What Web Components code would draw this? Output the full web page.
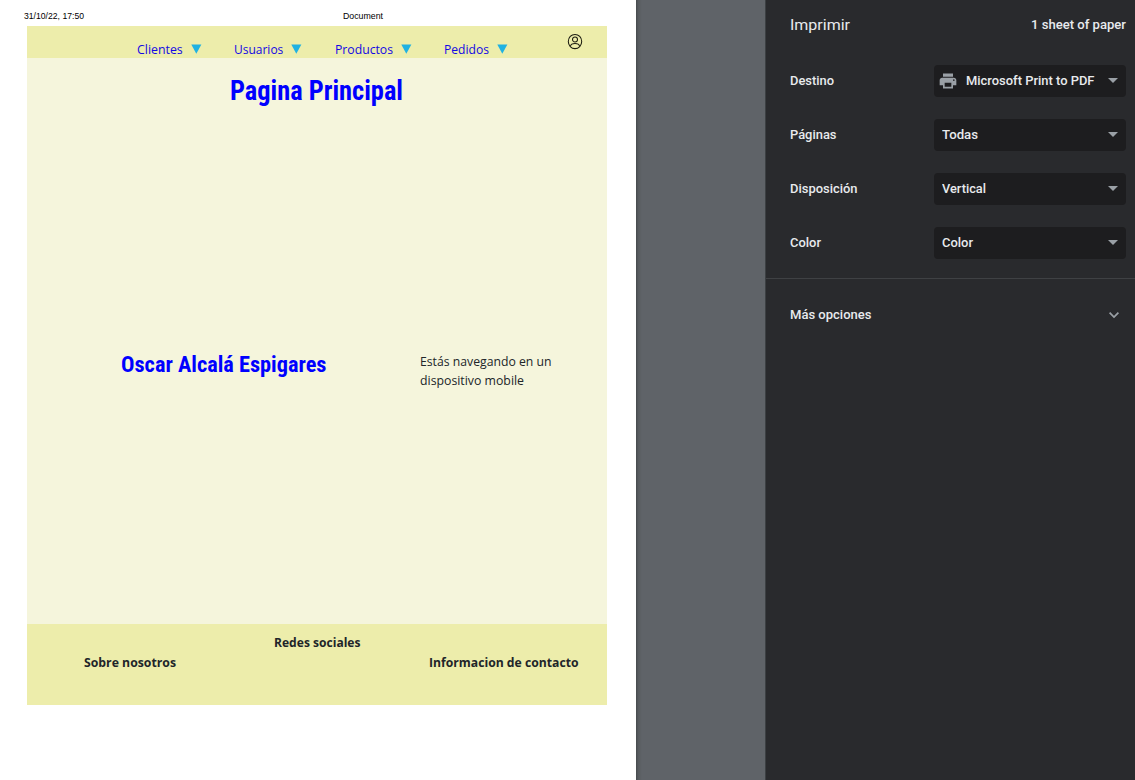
<!DOCTYPE html>
<html lang="es">
<head>
<meta charset="utf-8">
<title>Imprimir</title>
<style>
html,body{margin:0;height:100%;overflow:hidden;background:#fff}
</style>
</head>
<body>
<print-dialog></print-dialog>
<script>
function define(name, html, ready) {
  const t = document.createElement('template');
  t.innerHTML = html;
  customElements.define(name, class extends HTMLElement {
    connectedCallback() {
      if (this.shadowRoot) return;
      this.attachShadow({mode: 'open'}).append(t.content.cloneNode(true));
      if (ready) ready(this, this.shadowRoot);
    }
  });
}

/* One line of text condensed or widened to the width in its "w" attribute */
define('fit-text', `
<style>:host{display:block;flex:none;white-space:nowrap}
span{display:inline-block;transform-origin:0 50%;vertical-align:top}</style>
<span><slot></slot></span>`, (el, root) => {
  const s = root.querySelector('span'), w = +el.getAttribute('w');
  el.style.width = w + 'px';
  s.style.transform = 'scaleX(' + w / s.getBoundingClientRect().width + ')';
});

define('nav-item', `
<style>:host{display:flex;align-items:flex-start;gap:8px;color:#1208e4;font:13px/19px "Open Sans",sans-serif}
svg{margin-top:4px;flex:none;display:block}</style>
<slot></slot><svg width="11" height="10"><path d="M0.3 .6H10.4L5.3 9.8Z" fill="#20b2e2"/></svg>`);

define('user-icon', `
<style>:host{display:block}svg{display:block}</style>
<svg width="16" height="17" viewBox="0 0 16 17" fill="none" stroke="#1c1c10" stroke-width="1.05">
<ellipse cx="8" cy="8.5" rx="6.7" ry="7.1"/><circle cx="8" cy="6.4" r="2.5"/><path d="M3.4 13.4C4.2 9.6 11.8 9.6 12.6 13.4"/></svg>`);

define('site-header', `
<style>:host{display:flex;box-sizing:border-box;height:32px;padding:0 24px 0 110px;background:#ededab}
nav{display:flex;padding-top:14px}
nav-item+nav-item{margin-left:32.3px}
user-icon{margin:7px 0 0 auto}</style>
<nav><nav-item><fit-text w="45.7">Clientes</fit-text></nav-item><nav-item><fit-text w="49.3">Usuarios</fit-text></nav-item><nav-item><fit-text w="58">Productos</fit-text></nav-item><nav-item><fit-text w="45">Pedidos</fit-text></nav-item></nav>
<user-icon></user-icon>`);

define('site-main', `
<style>:host{display:block;height:566px;background:#f5f5dc;color:#212529;font:13px/19px "Open Sans",sans-serif}
h1,h2{margin:0;color:#00f;font-family:"Roboto Condensed",Roboto,sans-serif;font-weight:700;font-stretch:75%}
h1{font-size:27px;line-height:32px;padding:17px 0 0 203px}
.row{display:flex;margin-top:243px;padding-left:94px}
h2{font-size:22.3px;line-height:28px;width:299px}
p{margin:2px 0 0}</style>
<h1><fit-text w="173">Pagina Principal</fit-text></h1>
<div class="row"><h2><fit-text w="205.5">Oscar Alcalá Espigares</fit-text></h2>
<p><fit-text w="131.5">Estás navegando en un</fit-text><fit-text w="104">dispositivo mobile</fit-text></p></div>`);

define('site-footer', `
<style>:host{display:flex;box-sizing:border-box;height:81px;padding:9px 28.5px 0 57px;background:#ededab;color:#212529;font:700 13px/19px "Open Sans",sans-serif;justify-content:space-between}
.low{margin-top:20px}.mid{margin-left:29px}</style>
<fit-text class="low" w="92">Sobre nosotros</fit-text><fit-text class="mid" w="86.5">Redes sociales</fit-text><fit-text class="low" w="149.5">Informacion de contacto</fit-text>`);

define('paper-sheet', `
<style>:host{display:block;width:636px;height:780px;background:#fff;flex:none}
.meta{display:flex;height:26px;box-sizing:border-box;padding:10px 0 0 24px;gap:258.5px;font:9px/12px "Liberation Sans",sans-serif;color:#000}
article{width:580px;margin-left:27px}</style>
<div class="meta"><fit-text w="60">31/10/22, 17:50</fit-text><fit-text w="40">Document</fit-text></div>
<article><site-header></site-header><site-main></site-main><site-footer></site-footer></article>`);

define('select-box', `
<style>:host{display:flex;box-sizing:border-box;align-items:center;width:192px;height:32px;padding:0 8px;border-radius:4px;background:#1d1d1f}
.arrow{margin-left:auto;margin-bottom:1px;display:block}</style>
<slot></slot><svg class="arrow" width="10" height="5"><path d="M0 0H10L5 5Z" fill="#9aa0a6"/></svg>`);

define('printer-icon', `
<style>:host{display:block;margin:0 8px 0 -4px}svg{display:block}</style>
<svg width="20" height="20" viewBox="0 0 24 24" fill="#9aa0a6"><path d="M19 8H5c-1.66 0-3 1.34-3 3v6h4v4h12v-4h4v-6c0-1.66-1.34-3-3-3zm-3 11H8v-5h8v5zm3-7c-.55 0-1-.45-1-1s.45-1 1-1 1 .45 1 1-.45 1-1 1zm-1-9H6v4h12V3z"/></svg>`);

define('setting-row', `
<style>:host{display:flex;align-items:center;justify-content:space-between;height:54px;padding:0 9px 0 24px}</style>
<slot name="label"></slot><slot></slot>`);

define('print-settings', `
<style>:host{display:block;flex:1;border-left:1px solid #3c4043;background:#292a2d;color:#e8eaed;font:500 13px/20px Roboto,sans-serif}
header{display:flex;justify-content:space-between;align-items:center;box-sizing:border-box;height:54px;padding:0 9px 4px 24px}
.title{font-size:15.4px;font-weight:400}
.rows{height:224px;border-bottom:1px solid #3f4144}
.more{display:flex;justify-content:space-between;align-items:center;height:72px;padding:0 15px 0 24px}
svg{display:block}</style>
<header><fit-text class="title" w="60">Imprimir</fit-text><fit-text w="95">1 sheet of paper</fit-text></header>
<div class="rows">
<setting-row><fit-text slot="label" w="44">Destino</fit-text><select-box><printer-icon></printer-icon><fit-text w="128.5">Microsoft Print to PDF</fit-text></select-box></setting-row>
<setting-row><fit-text slot="label" w="46.5">Páginas</fit-text><select-box><fit-text w="36">Todas</fit-text></select-box></setting-row>
<setting-row><fit-text slot="label" w="67.5">Disposición</fit-text><select-box><fit-text w="44">Vertical</fit-text></select-box></setting-row>
<setting-row><fit-text slot="label" w="31">Color</fit-text><select-box><fit-text w="31">Color</fit-text></select-box></setting-row>
</div>
<div class="more"><fit-text w="81.5">Más opciones</fit-text><svg width="12" height="8" viewBox="0 0 12 8" fill="none" stroke="#9aa0a6" stroke-width="1.7"><path d="M1.6 1.6L6 6L10.4 1.6"/></svg></div>`);

define('print-dialog', `
<style>:host{display:flex;width:1135px;height:780px;overflow:hidden;background:#5f6368}
.gutter{width:129px;flex:none;background:linear-gradient(90deg,#45494c,#55595d 2px,#5b5f63 4px,#5f6368 6px)}</style>
<paper-sheet></paper-sheet><div class="gutter"></div><print-settings></print-settings>`);
</script>
</body>
</html>
